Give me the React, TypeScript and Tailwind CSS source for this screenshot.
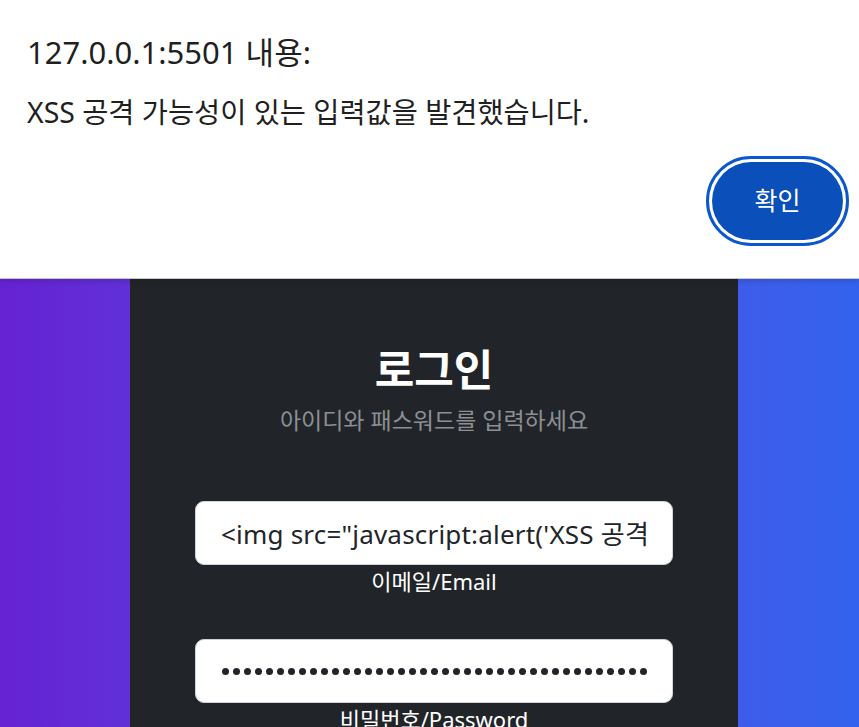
const FONT = '"Noto Sans", "Noto Sans CJK KR", sans-serif'

const PAYLOAD = `<img src="javascript:alert('XSS 공격 가능성 테스트')">`

export default function App() {
  return (
    <div className="flex h-[727px] w-[859px] flex-col overflow-hidden" style={{ fontFamily: FONT }}>
      {/* browser alert */}
      <div className="relative z-10 h-[279px] shrink-0 border-b border-[#c8c8c8] bg-white pl-[27px] pr-[10px] pt-[32px] shadow-[0_2px_6px_rgba(0,0,0,0.15)]">
        <div className="text-[31px] leading-[40px] text-[#1f1f1f]">127.0.0.1:5501 내용:</div>
        <div className="mt-[22px] text-[28.4px] leading-[36px] text-[#1f1f1f]">
          XSS 공격 가능성이 있는 입력값을 발견했습니다.
        </div>
        <div className="mt-[26px] flex justify-end">
          <button className="flex h-[90px] w-[143px] items-center justify-center rounded-full border-[3px] border-[#0b57d0] bg-white p-[3px]">
            <span className="flex h-full w-full items-center justify-center rounded-full bg-[#0b4fba] text-[25px] text-white">
              확인
            </span>
          </button>
        </div>
      </div>

      {/* page behind */}
      <div className="-mt-[1px] flex flex-1 bg-gradient-to-r from-[#6522d3] to-[#3263ee]">
        <div className="ml-[130px] flex w-[608px] flex-col items-center bg-[#212529] pt-[64px]">
          <h1 className="text-[43px] font-bold leading-[56px] text-white">로그인</h1>
          <p className="mt-[6px] text-[23px] leading-[32px] text-[#8c9095]">아이디와 패스워드를 입력하세요</p>

          <div className="mt-[65px] flex w-[478px] flex-col items-center">
            <input
              readOnly
              value={PAYLOAD}
              className="h-[64px] w-full rounded-[9px] border border-[#ced4da] bg-white px-[25px] text-center text-[26px] tracking-[0.2px] text-[#212529] outline-none"
            />
            <label className="mt-[1px] text-[22px] leading-[30px] text-white">이메일/Email</label>
          </div>

          <div className="mt-[43px] flex w-[478px] flex-col items-center">
            <div className="flex h-[64px] w-full items-center justify-center overflow-hidden rounded-[9px] border border-[#ced4da] bg-white px-[24px]">
              <div className="flex gap-[4px]">
                {Array.from({ length: 39 }).map((_, i) => (
                  <span key={i} className="h-[7px] w-[7px] rounded-full bg-[#212529]" />
                ))}
              </div>
            </div>
            <label className="mt-[1px] text-[22px] leading-[30px] text-white">비밀번호/Password</label>
          </div>
        </div>
      </div>
    </div>
  )
}
